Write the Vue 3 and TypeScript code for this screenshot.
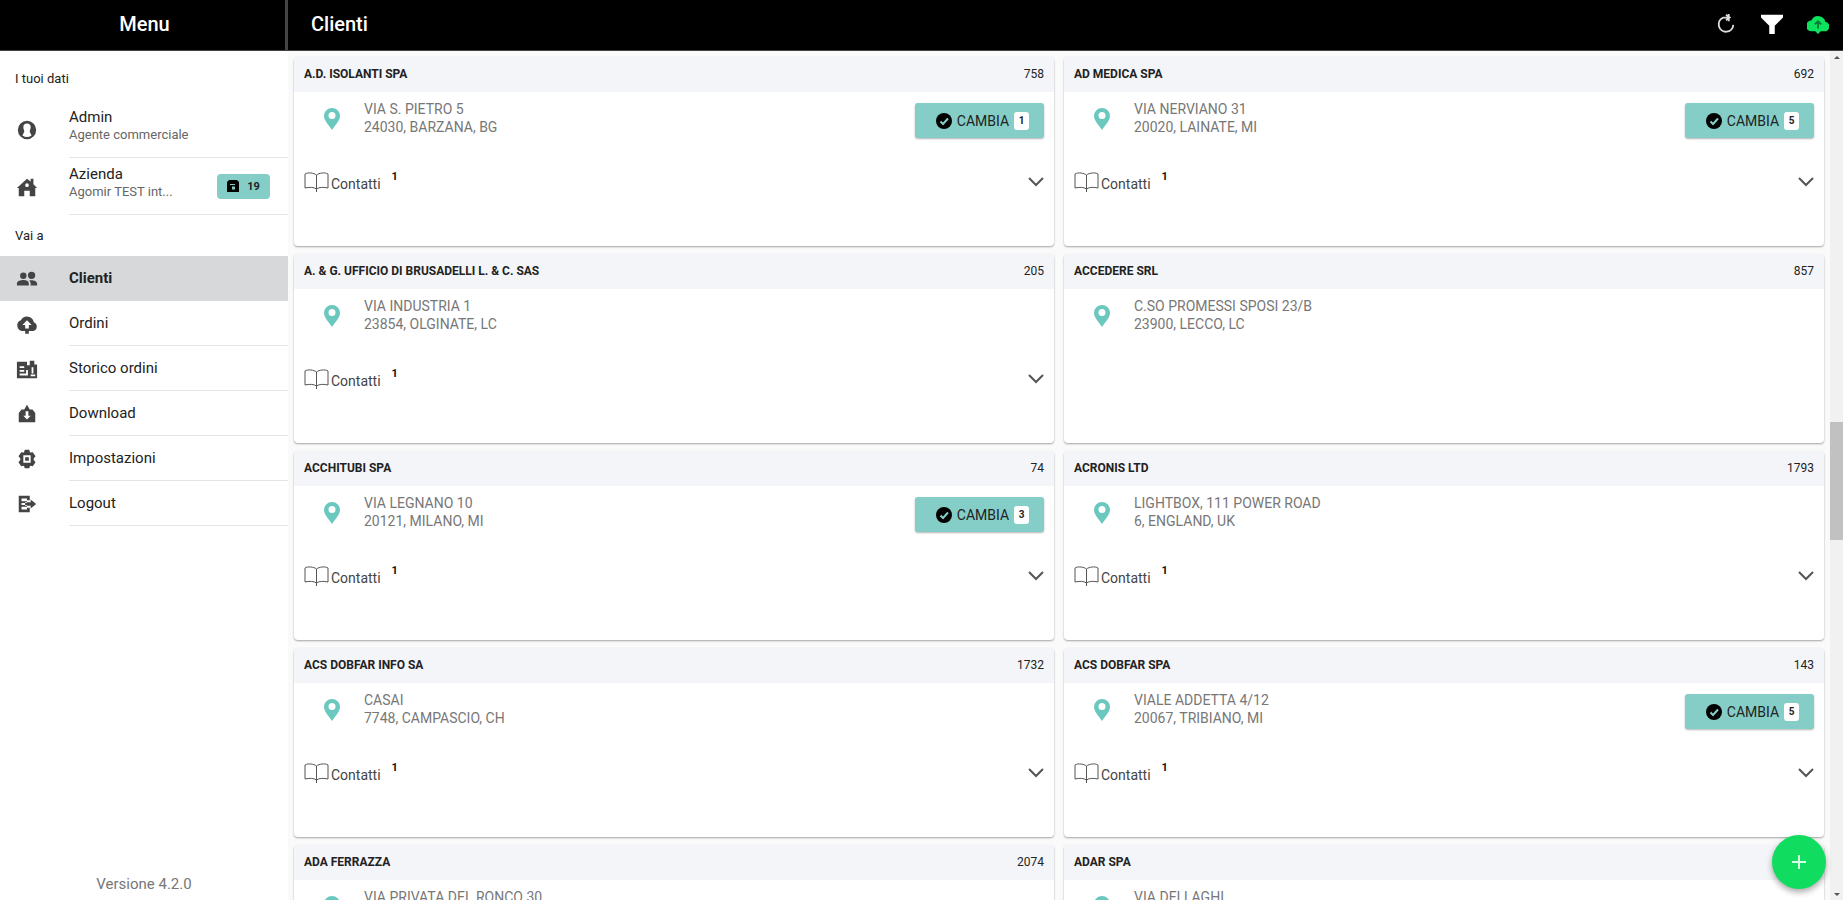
<script setup lang="ts">
import { ref } from 'vue'

interface MenuItem { label: string; icon: string }
interface Client {
  name: string
  code: string
  street: string
  city: string
  change?: number
  contacts?: number
}

const icons: Record<string, string> = {
  people: 'M8 5a3.5 3.5 0 1 1 0 7a3.5 3.5 0 0 1 0-7zM17 4a3.5 3.5 0 1 1 0 8a3.5 3.5 0 0 1 0-8zM1 19v-2c0-3 4-4 7-4s6 1 6 4v2zM16 19v-2c0-1.500-.6-2.600-1.500-3.500C18 12.800 23 14 23 17v2z',
  cloudUp: 'M19.400 10A7.500 7.500 0 0 0 5.400 8A6 6 0 0 0 6 19.500h4v3h4v-3h5a5 5 0 0 0 .4-9.500zM14 13v4h-4v-4H7l5-5 5 5z',
  history: 'M1 4h11v4h3V3h5v4h3v15H1zM4 9v2h5V9zM4 13v2h5v-2zM4 17v2h9v-6h-2v4zM17 10v7h2v-7zM16 18v2h5v-2z',
  download: 'M12 2l3 5h3l3 4v10H3V11l3-4h3zM10.500 9v5H8l4 4 4-4h-2.500V9z',
  settings: 'M9.500 2h5l.8 3 3-.4 3 4.400-2 2.500v1.500l2 2.500-3 4.400-3-.5-.8 2.600h-5l-.8-2.600-3 .5-3-4.400 2-2.500V11.500l-2-2.500 3-4.400 3 .4zM8 8v8h8V8zM10 10h4v4h-4z',
  logout: 'M3 3h12v5h-3V6H6v3h6v2H6v2h6v2H6v3h6v-2h3v5H3zM16 7l6 5-6 5v-3h-6v-4h6z',
}

const menu: MenuItem[] = [
  { label: 'Clienti', icon: 'people' },
  { label: 'Ordini', icon: 'cloudUp' },
  { label: 'Storico ordini', icon: 'history' },
  { label: 'Download', icon: 'download' },
  { label: 'Impostazioni', icon: 'settings' },
  { label: 'Logout', icon: 'logout' },
]
const active = ref('Clienti')

const clients: Client[] = [
  { name: 'A.D. ISOLANTI SPA', code: '758', street: 'VIA S. PIETRO 5', city: '24030, BARZANA, BG', change: 1, contacts: 1 },
  { name: 'AD MEDICA SPA', code: '692', street: 'VIA NERVIANO 31', city: '20020, LAINATE, MI', change: 5, contacts: 1 },
  { name: 'A. & G. UFFICIO DI BRUSADELLI L. & C. SAS', code: '205', street: 'VIA INDUSTRIA 1', city: '23854, OLGINATE, LC', contacts: 1 },
  { name: 'ACCEDERE SRL', code: '857', street: 'C.SO PROMESSI SPOSI 23/B', city: '23900, LECCO, LC' },
  { name: 'ACCHITUBI SPA', code: '74', street: 'VIA LEGNANO 10', city: '20121, MILANO, MI', change: 3, contacts: 1 },
  { name: 'ACRONIS LTD', code: '1793', street: 'LIGHTBOX, 111 POWER ROAD', city: '6, ENGLAND, UK', contacts: 1 },
  { name: 'ACS DOBFAR INFO SA', code: '1732', street: 'CASAI', city: '7748, CAMPASCIO, CH', contacts: 1 },
  { name: 'ACS DOBFAR SPA', code: '143', street: 'VIALE ADDETTA 4/12', city: '20067, TRIBIANO, MI', change: 5, contacts: 1 },
  { name: 'ADA FERRAZZA', code: '2074', street: 'VIA PRIVATA DEL RONCO 30', city: '' },
  { name: 'ADAR SPA', code: '', street: 'VIA DEI LAGHI', city: '' },
]
</script>

<template>
  <div class="app">
    <aside class="side">
      <header class="bar menu-bar"><h2>Menu</h2></header>
      <h3 class="label">I tuoi dati</h3>
      <div class="info">
        <svg class="ico" viewBox="0 0 24 24"><path fill-rule="evenodd" d="M12 2a10 10 0 1 0 0 20a10 10 0 0 0 0-20zM12 5a4 4 0 0 1 4 4c0 2-1 3-1 5l2 4a9 9 0 0 1-10 0l2-4c0-2-1-3-1-5a4 4 0 0 1 4-4z" /></svg>
        <div class="info-body">
          <div class="info-text"><span class="main">Admin</span><span class="sub">Agente commerciale</span></div>
        </div>
      </div>
      <div class="info">
        <svg class="ico" viewBox="0 0 24 24"><path fill-rule="evenodd" d="M12 3l4 3V3h3v6l4 4h-2v9h-6v-6H9v6H3v-9H1zM12 8a2 2 0 1 0 0 4a2 2 0 0 0 0-4z" /></svg>
        <div class="info-body">
          <div class="info-text"><span class="main">Azienda</span><span class="sub">Agomir TEST int...</span></div>
          <button class="count" type="button">
            <svg viewBox="0 0 12 12"><path fill-rule="evenodd" d="M2 0h8l2 2v10H0V2zM3 4v1h5V4zM5 6.500v3h3v-3z" /></svg>
            <span>19</span>
          </button>
        </div>
      </div>
      <h3 class="label go">Vai a</h3>
      <nav>
        <a v-for="m in menu" :key="m.label" href="#" class="item" :class="{ active: active === m.label }" @click.prevent="active = m.label">
          <svg class="ico" viewBox="0 0 24 24"><path fill-rule="evenodd" :d="icons[m.icon]" /></svg>
          <span class="item-label">{{ m.label }}</span>
        </a>
      </nav>
      <footer class="version">Versione 4.2.0</footer>
    </aside>

    <main class="page">
      <header class="bar page-bar">
        <h1>Clienti</h1>
        <button class="tool" type="button" aria-label="Aggiorna">
          <svg viewBox="0 0 24 24" fill="none" stroke="#ddd" stroke-width="2"><path d="M9 5a8 8 0 1 0 11 8M9 5h6M15 1v8M12 2l4 3-4 3" /></svg>
        </button>
        <button class="tool" type="button" aria-label="Filtra">
          <svg viewBox="0 0 24 24" fill="#fff"><path d="M0 2h24v3l-9 9v9H9v-9L0 5z" /></svg>
        </button>
        <button class="tool" type="button" aria-label="Sincronizza">
          <svg viewBox="0 0 24 24"><path fill="#0be35c" d="M20 9.500A8 8 0 0 0 5 8a6 6 0 0 0 0 12h4l3 3 3-3h4a5.300 5.300 0 0 0 1-10.500z" /><path fill="none" stroke="#067a34" stroke-width="2" d="M12 17V9M8.500 12.500L12 9l3.500 3.500" /></svg>
        </button>
      </header>
      <div class="scroll">
        <section class="grid">
          <article v-for="c in clients" :key="c.name" class="card">
            <header class="card-head"><h2>{{ c.name }}</h2><span>{{ c.code }}</span></header>
            <div class="place">
              <svg class="pin" viewBox="0 0 16 22"><path fill="#6bc8bf" fill-rule="evenodd" d="M8 0a8 8 0 0 1 8 8c0 5-5 9-8 14C5 17 0 13 0 8a8 8 0 0 1 8-8zM8 4a3.500 3.500 0 1 0 0 7a3.500 3.500 0 0 0 0-7z" /></svg>
              <address>{{ c.street }}<br />{{ c.city }}</address>
              <button v-if="c.change" class="change" type="button">
                <svg viewBox="0 0 16 16"><circle cx="8" cy="8" r="8" /><path fill="none" stroke="#84cec7" stroke-width="2" d="M4.500 8.500L7 11l5-5.500" /></svg>
                <span>CAMBIA</span><b>{{ c.change }}</b>
              </button>
            </div>
            <button v-if="c.contacts" class="contacts" type="button">
              <svg class="book" viewBox="0 0 25 20" fill="none" stroke="#555" stroke-width="1"><path d="M12.500 3C10 1 4 0 1 2v14c4-1 9-1 11.500 1 2.500-2 7.500-2 11.500-1V2c-3-2-9-1-11.500 1zM12.500 3v17" /></svg>
              <span class="who">Contatti</span><b>{{ c.contacts }}</b>
              <svg class="chev" viewBox="0 0 16 10" fill="none" stroke="#555" stroke-width="2"><path d="M1 1l7 7 7-7" /></svg>
            </button>
          </article>
        </section>
        <div class="track">
          <span class="arrow up"></span>
          <span class="before"></span><span class="thumb"></span><span class="after"></span>
          <span class="arrow down"></span>
        </div>
      </div>
      <button class="fab" type="button" aria-label="Aggiungi">
        <svg viewBox="0 0 14 14" stroke="#d6ffe5" stroke-width="2"><path d="M7 0v14M0 7h14" /></svg>
      </button>
    </main>
  </div>
</template>

<style>
body { margin: 0; }
</style>

<style scoped>
* { box-sizing: border-box; }
.app { display: flex; height: 100vh; overflow: hidden; font-family: Roboto, "Liberation Sans", sans-serif; color: #222; background: #fff; }
h1, h2, h3 { margin: 0; font-weight: 500; }
button { font: inherit; color: inherit; border: 0; background: none; padding: 0; cursor: pointer; }
a { color: inherit; text-decoration: none; }
.bar { display: flex; align-items: center; height: 51px; flex: none; background: #000; color: #fff; border-bottom: 1px solid #444; }
.side { display: flex; flex-direction: column; width: 288px; flex: none; }
.menu-bar { justify-content: center; border-right: 3px solid #444; padding: 0 0 2px 4px; }
.menu-bar h2, .page-bar h1 { font-size: 20px; line-height: 24px; }
.label { font-size: 13px; line-height: 16px; padding: 20px 15px 14px; font-weight: 400; }
.label.go { padding: 13px 15px 12px; }
.ico { width: 22px; height: 22px; margin: 0 31px 0 16px; flex: none; fill: #444; }
.info { display: flex; align-items: center; height: 57px; }
.info-body { display: flex; align-items: center; justify-content: space-between; flex: 1; height: 100%; border-bottom: 1px solid #e4e4e4; padding-right: 18px; }
.info-text { display: flex; flex-direction: column; padding-bottom: 6px; }
.main { font-size: 15px; line-height: 18px; }
.sub { font-size: 13px; line-height: 18px; color: #666; }
.count { display: flex; align-items: center; justify-content: center; gap: 8px; width: 53px; height: 25px; border-radius: 4px; background: #84cec7; font-size: 11px; font-weight: 700; }
.count svg { width: 12px; height: 12px; }
.item { display: flex; align-items: center; height: 45px; font-size: 15px; }
.item-label { display: flex; align-items: center; flex: 1; height: 100%; border-bottom: 1px solid #e4e4e4; }
.item.active { background: #d7d8da; font-weight: 700; }
.item.active .item-label { border-color: #d7d8da; }
.version { margin-top: auto; padding: 0 0 7px; text-align: center; font-size: 15px; line-height: 18px; color: #777; }
.page { display: flex; flex-direction: column; flex: 1; min-width: 0; position: relative; }
.page-bar { padding: 0 14px 2px 23px; }
.page-bar h1 { flex: 1; }
.tool { display: flex; margin-left: 24px; }
.tool svg { width: 22px; height: 22px; }
.scroll { display: flex; flex: 1; min-height: 0; background: #fafafa; }
.grid { flex: 1; min-width: 0; display: grid; grid-template-columns: 1fr 1fr; grid-auto-rows: 189px; gap: 8px 10px; padding: 6px 6px 0; overflow: hidden; }
.card { background: #fff; border-radius: 4px; box-shadow: 0 1px 2px rgba(0, 0, 0, 0.35); overflow: hidden; }
.card-head { display: flex; align-items: center; justify-content: space-between; height: 35px; padding: 0 10px 2px; background: #f4f5f9; font-size: 12px; }
.card-head h2 { font-size: 12px; font-weight: 700; }
.place { display: flex; align-items: flex-start; height: 79px; padding: 8px 10px 0 30px; }
.pin { width: 16px; height: 22px; margin: 8px 24px 0 0; }
address { flex: 1; font-style: normal; font-size: 14px; line-height: 18px; color: #777; }
.change { display: flex; align-items: center; justify-content: center; width: 129px; height: 35px; padding-left: 6px; margin-top: 3px; background: #84cec7; border-radius: 3px; box-shadow: 0 1px 2px rgba(0, 0, 0, 0.3); font-size: 14px; gap: 5px; }
.change svg { width: 16px; height: 16px; }
.change b { width: 15px; line-height: 18px; border-radius: 3px; background: #fff; font-size: 10px; }
.contacts { display: flex; align-items: center; width: 100%; height: 22px; padding: 0 10px; font-size: 14px; color: #444; }
.book { width: 25px; height: 20px; margin-right: 2px; }
.who { padding-top: 3px; }
.contacts b { margin-left: 11px; font-size: 11px; line-height: 12px; align-self: flex-start; color: #111; }
.chev { width: 16px; height: 10px; margin-left: auto; }
.track { display: flex; flex-direction: column; align-items: center; width: 13px; padding: 5px 0 4px; background: #f1f1f1; }
.arrow { border: 3px solid transparent; }
.up { border-bottom-color: #555; border-top: 0; }
.down { border-top-color: #555; border-bottom: 0; }
.before { flex: 362; }
.thumb { flex: 117; width: 100%; background: #c1c1c1; }
.after { flex: 352; }
.fab { position: absolute; right: 17px; bottom: 11px; display: flex; align-items: center; justify-content: center; width: 54px; height: 54px; border-radius: 50%; background: #10dc60; box-shadow: 0 3px 6px rgba(0, 0, 0, 0.35); }
.fab svg { width: 14px; height: 14px; }
</style>
